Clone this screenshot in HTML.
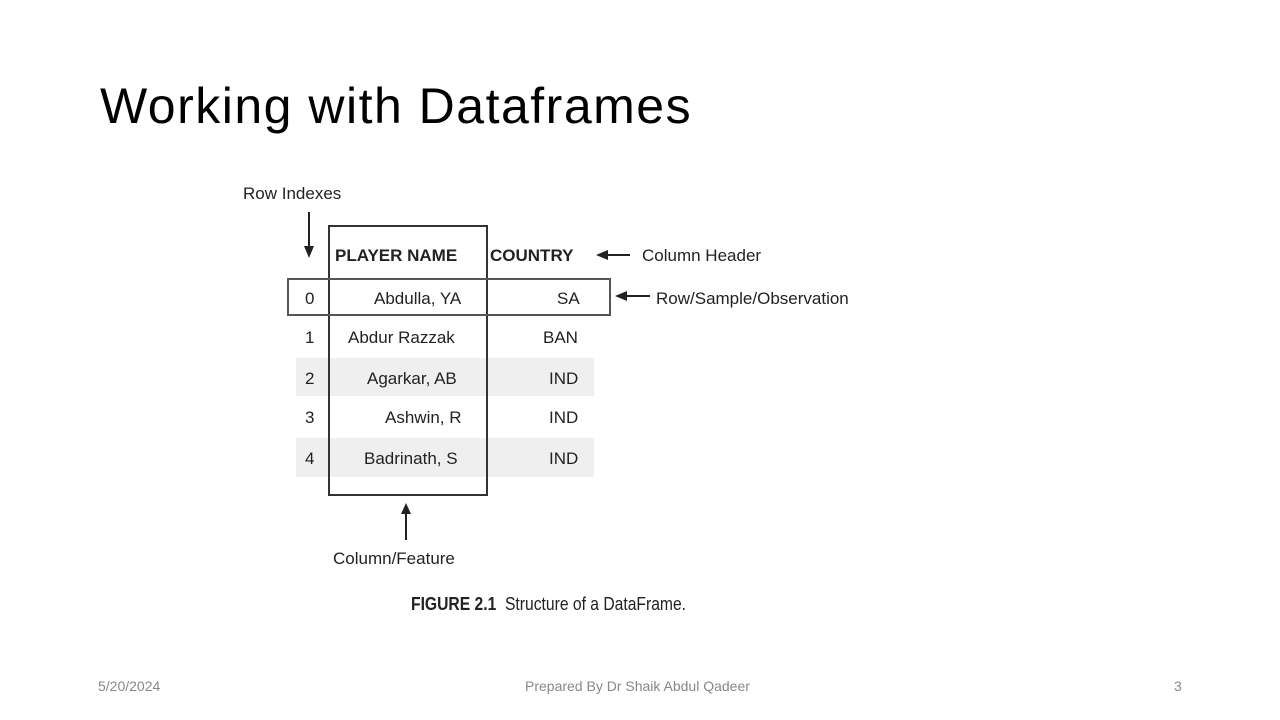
<!DOCTYPE html>
<html><head><style>
body{margin:0;width:1280px;height:720px;background:#fff;position:relative;overflow:hidden;font-family:"Liberation Sans",sans-serif}
.a{position:absolute;white-space:nowrap}
.t{font-size:17px;color:#222;line-height:20px}
.b{font-weight:bold}
.g{position:absolute;background:#efefef}
.f{font-size:14px;color:#888}
</style></head><body>
<div class="a" style="left:100px;top:77px;font-size:50px;color:#000;letter-spacing:1.5px">Working with Dataframes</div>

<div class="g" style="left:296px;top:358px;width:298px;height:38px"></div>
<div class="g" style="left:296px;top:438px;width:298px;height:39px"></div>

<div class="a" style="left:328px;top:225px;width:156px;height:267px;border:2px solid #333"></div>
<div class="a" style="left:287px;top:278px;width:320px;height:34px;border:2px solid #555"></div>

<svg class="a" style="left:0;top:0" width="1280" height="720">
<g stroke="#222" stroke-width="2" fill="#222">
<line x1="309" y1="212" x2="309" y2="250"/><polygon points="304,246 314,246 309,258" stroke="none"/>
<line x1="406" y1="540" x2="406" y2="510"/><polygon points="401,514 411,514 406,503" stroke="none"/>
<line x1="630" y1="255" x2="605" y2="255"/><polygon points="608,250 608,260 596,255" stroke="none"/>
<line x1="650" y1="296" x2="624" y2="296"/><polygon points="627,291 627,301 615,296" stroke="none"/>
</g></svg>

<div class="a t" style="left:243px;top:184px">Row Indexes</div>
<div class="a t b" style="left:335px;top:246px">PLAYER NAME</div>
<div class="a t b" style="left:490px;top:246px">COUNTRY</div>
<div class="a t" style="left:642px;top:246px">Column Header</div>
<div class="a t" style="left:656px;top:289px">Row/Sample/Observation</div>

<div class="a t" style="left:305px;top:289px">0</div>
<div class="a t" style="left:305px;top:328px">1</div>
<div class="a t" style="left:305px;top:369px">2</div>
<div class="a t" style="left:305px;top:408px">3</div>
<div class="a t" style="left:305px;top:449px">4</div>

<div class="a t" style="left:374px;top:289px">Abdulla, YA</div>
<div class="a t" style="left:348px;top:328px">Abdur Razzak</div>
<div class="a t" style="left:367px;top:369px">Agarkar, AB</div>
<div class="a t" style="left:385px;top:408px">Ashwin, R</div>
<div class="a t" style="left:364px;top:449px">Badrinath, S</div>

<div class="a t" style="left:557px;top:289px">SA</div>
<div class="a t" style="left:543px;top:328px">BAN</div>
<div class="a t" style="left:549px;top:369px">IND</div>
<div class="a t" style="left:549px;top:408px">IND</div>
<div class="a t" style="left:549px;top:449px">IND</div>

<div class="a t" style="left:333px;top:549px">Column/Feature</div>
<div class="a" style="left:411px;top:594px;font-size:18px;color:#222;transform:scaleX(0.87);transform-origin:left"><b>FIGURE 2.1</b>&nbsp;&nbsp;Structure of a DataFrame.</div>

<div class="a f" style="left:98px;top:678px">5/20/2024</div>
<div class="a f" style="left:525px;top:678px">Prepared By Dr Shaik Abdul Qadeer</div>
<div class="a f" style="left:1174px;top:678px">3</div>
</body></html>
